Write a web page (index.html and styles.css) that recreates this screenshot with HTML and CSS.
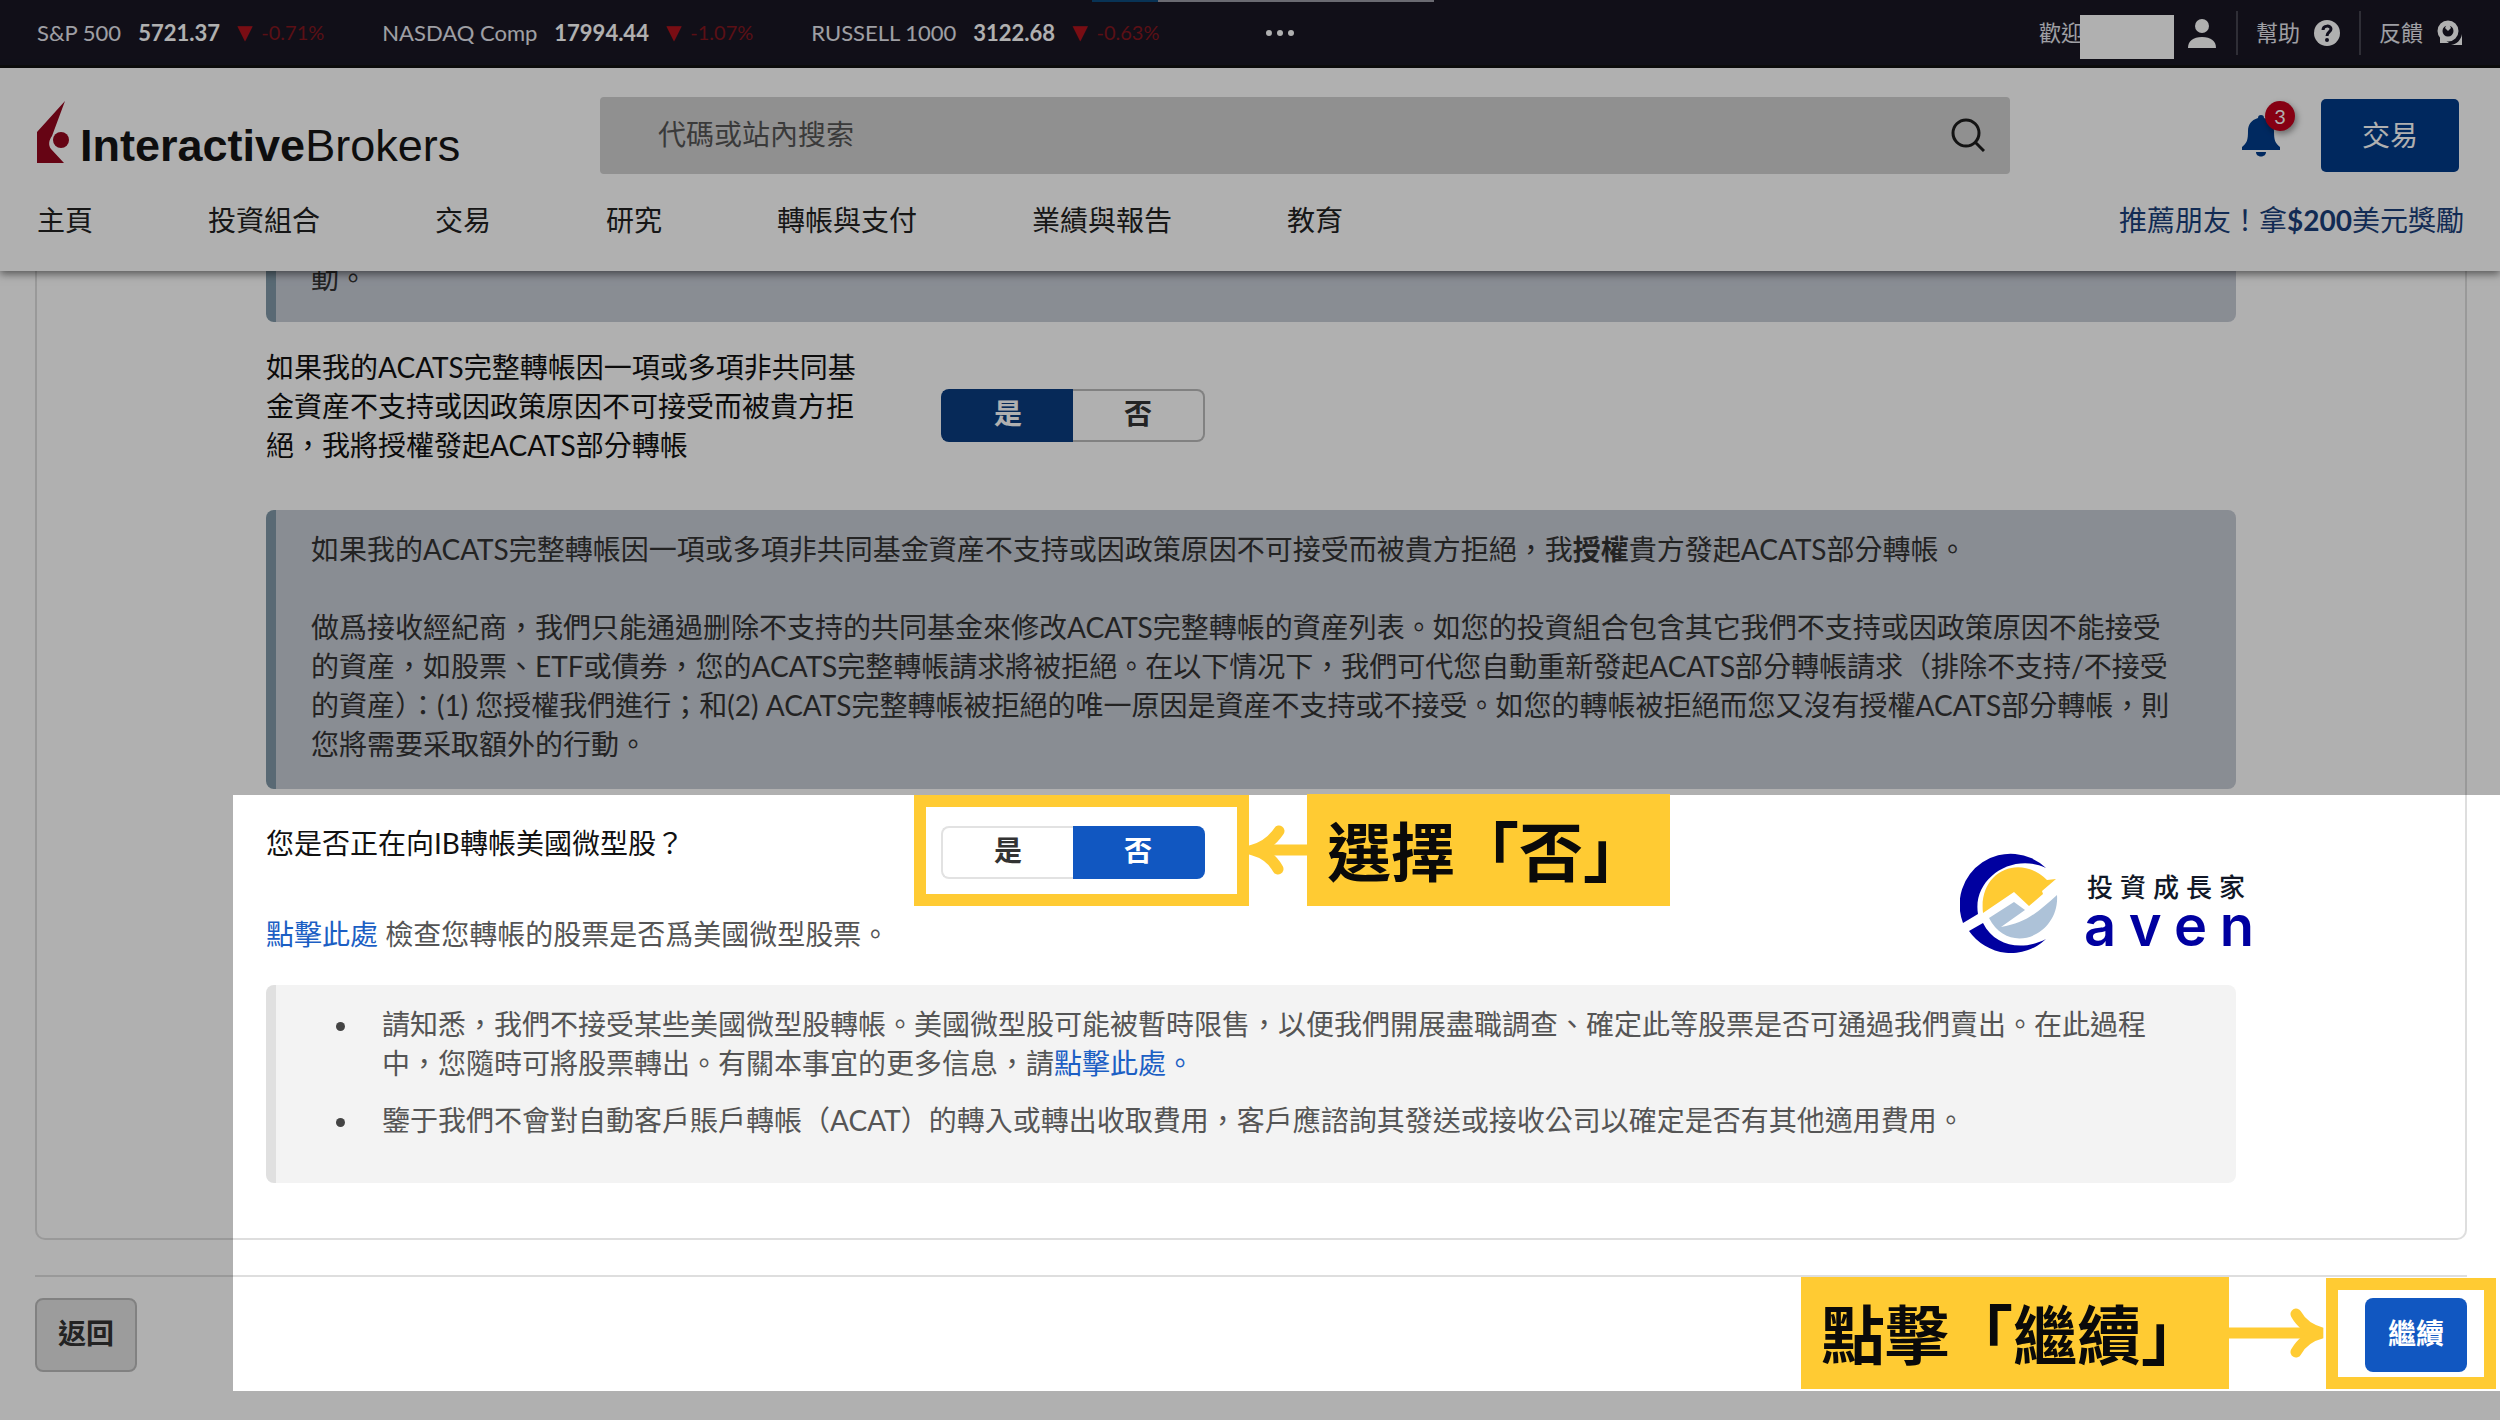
FILE: index.html
```html
<!DOCTYPE html>
<html lang="zh-Hant">
<head>
<meta charset="utf-8">
<title>InteractiveBrokers</title>
<link rel="stylesheet" href="styles.css">
</head>
<body>
<div class="page">
  <div class="topbar">
    <div class="progress"><i></i></div>
    <div class="tickers">
      <span class="ticker">S&amp;P 500 <b>5721.37</b> <span class="down">▼</span><em>-0.71%</em></span>
      <span class="ticker">NASDAQ Comp <b>17994.44</b> <span class="down">▼</span><em>-1.07%</em></span>
      <span class="ticker">RUSSELL 1000 <b>3122.68</b> <span class="down">▼</span><em>-0.63%</em></span>
      <button class="more" aria-label="更多"><i></i><i></i><i></i></button>
    </div>
    <div class="account">
      <span class="welcome">歡迎<i class="mask"></i>
        <svg width="28" height="32" viewBox="0 0 28 32"><circle cx="14" cy="9" r="7" fill="#fff"/><path d="M0 31c0-7 5-11 14-11s14 4 14 11z" fill="#fff"/></svg>
      </span>
      <a href="#" class="tool">幫助
        <svg width="28" height="28" viewBox="0 0 28 28"><circle cx="14" cy="14" r="13" fill="#fff"/><path d="M10 11c0-5 8-5 8-1 0 3-4 3-4 7" fill="none" stroke="#19172a" stroke-width="3"/><circle cx="14" cy="21" r="2" fill="#19172a"/></svg>
      </a>
      <a href="#" class="tool">反饋
        <svg width="28" height="28" viewBox="0 0 28 28"><path d="M26 15v11H15c6-1 10-5 11-11z" fill="#fff"/><circle cx="12" cy="12" r="8" fill="none" stroke="#fff" stroke-width="5"/><path d="M4 17v7h9z" fill="#fff"/><path d="M12 3l3 6-3 3-3-3z" fill="#fff"/></svg>
      </a>
    </div>
  </div>

  <header class="header">
    <div class="brand-row">
      <a href="#" class="logo">
        <svg width="34" height="64" viewBox="0 0 34 64"><path d="M28 0L0 31v31h27L14 48c-3-4-2-9 1-13z" fill="#94061e"/><circle cx="24" cy="39" r="8" fill="#94061e"/></svg>
        <span><b>Interactive</b>Brokers</span>
      </a>
      <form class="search">
        <input type="text" placeholder="代碼或站內搜索" aria-label="代碼或站內搜索">
        <button type="button" aria-label="搜索">
          <svg width="34" height="34" viewBox="0 0 34 34" fill="none" stroke="#1c1c1c" stroke-width="3"><circle cx="15" cy="15" r="13"/><path d="M24 24l9 9"/></svg>
        </button>
      </form>
      <div class="actions">
        <button class="bell" aria-label="通知">
          <svg width="38" height="42" viewBox="0 0 38 42" fill="#003c8c"><path d="M19 0c2 0 3 1 3 3 7 2 10 7 10 13 0 9 1 12 6 16v3H0v-3c5-4 6-7 6-16C6 10 9 5 16 3c0-2 1-3 3-3zM14 37h10c0 6-10 6-10 0z"/></svg>
          <span class="badge">3</span>
        </button>
        <button class="trade">交易</button>
      </div>
    </div>
    <nav class="nav">
      <a href="#">主頁</a><a href="#">投資組合</a><a href="#">交易</a><a href="#">研究</a><a href="#">轉帳與支付</a><a href="#">業績與報告</a><a href="#">教育</a>
      <a href="#" class="refer">推薦朋友！拿<b>$200</b>美元獎勵</a>
    </nav>
  </header>

  <main class="main">
    <section class="card">
      <div class="note note-blue note-cut"><p>動。</p></div>

      <div class="question">
        <p class="label" id="q1">如果我的ACATS完整轉帳因一項或多項非共同基金資産不支持或因政策原因不可接受而被貴方拒絕，我將授權發起ACATS部分轉帳</p>
        <div class="toggle toggle-mid" role="group" aria-labelledby="q1">
          <button class="on">是</button><button>否</button>
        </div>
      </div>

      <div class="note note-blue note-acats">
        <p>如果我的ACATS完整轉帳因一項或多項非共同基金資産不支持或因政策原因不可接受而被貴方拒絕，我<b>授權</b>貴方發起ACATS部分轉帳。</p>
        <p>做爲接收經紀商，我們只能通過删除不支持的共同基金來修改ACATS完整轉帳的資産列表。如您的投資組合包含其它我們不支持或因政策原因不能接受<br>的資産，如股票、ETF或債券，您的ACATS完整轉帳請求將被拒絕。在以下情况下，我們可代您自動重新發起ACATS部分轉帳請求（排除不支持/不接受<br>的資産）：(1) 您授權我們進行；和(2) ACATS完整轉帳被拒絕的唯一原因是資産不支持或不接受。如您的轉帳被拒絕而您又沒有授權ACATS部分轉帳，則<br>您將需要采取額外的行動。</p>
      </div>

      <div class="question question-micro">
        <p class="label" id="q2">您是否正在向IB轉帳美國微型股？</p>
        <div class="toggle" role="group" aria-labelledby="q2">
          <button>是</button><button class="on">否</button>
        </div>
      </div>
      <p class="check"><a href="#">點擊此處</a> 檢查您轉帳的股票是否爲美國微型股票。</p>

      <div class="note note-grey">
        <ul>
          <li>請知悉，我們不接受某些美國微型股轉帳。美國微型股可能被暫時限售，以便我們開展盡職調查、確定此等股票是否可通過我們賣出。在此過程<br>中，您隨時可將股票轉出。有關本事宜的更多信息，請<a href="#">點擊此處。</a></li>
          <li>鑒于我們不會對自動客戶賬戶轉帳（ACAT）的轉入或轉出收取費用，客戶應諮詢其發送或接收公司以確定是否有其他適用費用。</li>
        </ul>
      </div>
    </section>

    <footer class="footer">
      <button class="back">返回</button>
      <button class="next">繼續</button>
    </footer>
  </main>

  <div class="spotlight"></div>

  <div class="callout callout-choose">
    <div class="frame frame-toggle"></div>
    <svg width="58" height="50" viewBox="0 0 58 50" fill="none" stroke="#ffcb33" stroke-width="11" stroke-linecap="round"><path d="M58 25H6" stroke-linecap="butt"/><path d="M30 6C24 15 15 22 4 25c11 3 20 10 25 19"/></svg>
    <div class="tag">選擇「否」</div>
  </div>

  <div class="aven">
    <svg width="98" height="102" viewBox="0 0 98 102">
      <path d="M3 70A51 51 0 0 1 86 15C52-1 12 26 18 61z" fill="#0000a0"/>
      <path d="M9 78l14-8c12 24 40 28 63 16A51 51 0 0 1 9 78z" fill="#0000a0"/>
      <path d="M23 60C18 18 60 0 87 27l9-1-14 12 1 3-14 12-15-14z" fill="#ffcb33"/>
      <path d="M29 65l25-16 11 8-24 17C66 70 78 59 97 42c3 40-48 62-68 23z" fill="#adc2d8"/>
    </svg>
    <div class="aven-words">
      <div class="aven-zh"><span>投</span><span>資</span><span>成</span><span>長</span><span>家</span></div>
      <div class="aven-en"><span>a</span><span>v</span><span>e</span><span>n</span></div>
    </div>
  </div>

  <div class="callout callout-next">
    <div class="tag tag-wide">點擊「繼續」</div>
    <svg width="97" height="50" viewBox="0 0 97 50" fill="none" stroke="#ffcb33" stroke-width="11" stroke-linecap="round"><path d="M0 25h90" stroke-linecap="butt"/><path d="M67 6c5 9 14 16 26 19-12 3-21 10-26 19"/></svg>
    <div class="frame frame-next"></div>
  </div>
</div>
</body>
</html>
```
FILE: styles.css
```css
* { box-sizing: border-box; }

body {
  margin: 0;
  background: #fff;
  color: #333;
  font-family: Lato, "Noto Sans CJK TC", sans-serif;
  font-size: 28px;
  line-height: 39px;
}

p, ul { margin: 0; padding: 0; }
a { color: #1c5fc4; text-decoration: none; }
button { margin: 0; padding: 0; border: 0; background: none; font: inherit; color: inherit; }
svg { display: block; flex: none; }

.page { position: relative; min-height: 100vh; overflow: hidden; }

/* Market bar */
.topbar {
  position: relative;
  display: flex;
  justify-content: space-between;
  height: 68px;
  padding: 0 36px 0 37px;
  background: #191724;
  border-bottom: 3px solid #131313;
  color: #e6e6ee;
  font-size: 22px;
}
.progress { position: absolute; left: 1092px; top: 0; width: 342px; height: 2px; background: #9a9aa4; }
.progress i { display: block; width: 66px; height: 2px; background: #0d4a7c; }
.tickers { display: flex; align-items: center; gap: 58px; }
.ticker { display: flex; align-items: center; gap: 17px; white-space: nowrap; }
.ticker b { color: #fff; }
.ticker .down { color: #b0141c; font-family: "DejaVu Sans", sans-serif; font-size: 20px; }
.ticker em { margin-left: -8px; color: #84161f; font-size: 20px; font-style: normal; }
.more { display: flex; gap: 5px; margin-left: 48px; }
.more i { width: 6px; height: 6px; border-radius: 50%; background: #fff; }
.account { display: flex; align-items: center; }
.welcome { display: flex; align-items: center; height: 44px; padding-right: 20px; }
.mask { width: 94px; height: 44px; margin: 8px 14px 0 -3px; background: #fff; }
.tool { display: flex; align-items: center; gap: 13px; height: 44px; padding: 0 18px; border-left: 2px solid #45434f; color: #e6e6ee; }
.tool:last-child { padding-right: 0; }

/* Site header */
.header {
  position: relative;
  z-index: 1;
  height: 203px;
  padding: 29px 36px 0 37px;
  background: #fff;
  box-shadow: 0 3px 8px rgba(0, 0, 0, .5);
}
.brand-row { display: flex; height: 77px; }
.logo { display: flex; gap: 9px; width: 563px; flex: none; padding-top: 4px; color: #151515; font-family: "Liberation Sans", Arial, sans-serif; font-size: 45px; line-height: 50px; }
.logo span { padding-top: 20px; }
.search { display: flex; align-items: center; flex: 1; padding: 0 25px 2px 58px; border-radius: 4px; background: #d1d1d1; }
.search input { flex: 1; padding: 0; border: 0; background: none; font: inherit; outline: 0; }
.search input::placeholder { color: #555; opacity: 1; }
.actions { display: flex; align-items: center; justify-content: space-between; width: 217px; margin: 0 5px 0 232px; }
.bell { position: relative; }
.badge { position: absolute; left: 23px; top: -14px; width: 30px; height: 30px; border-radius: 50%; background: #c2001c; box-shadow: 2px 3px 6px rgba(0, 0, 0, .4); color: #fff; font-size: 20px; line-height: 30px; }
.trade { width: 138px; height: 73px; border-radius: 5px; background: #003a88; color: #fff; }
.nav { display: flex; gap: 115px; padding-top: 27px; }
.nav a { color: #222; white-space: nowrap; }
.nav .refer { margin-left: auto; color: #1b3f7a; }

/* Transfer form */
.main { padding: 0 33px 0 35px; }
.card { padding: 0 229px 55px; border: 2px solid #dedede; border-top: 0; border-radius: 0 0 10px 10px; }
.note { padding: 20px 20px 25px 35px; border-left: 10px solid #e0e0e0; border-radius: 8px; white-space: nowrap; }
.note p + p { margin-top: 39px; }
.note-blue { background: #c7ccd6; border-color: #8199a8; }
.note-cut { height: 51px; padding: 0 35px; border-radius: 0 0 8px 8px; overflow: hidden; }
.note-cut p { margin-top: -12px; }
.question { display: flex; align-items: flex-start; gap: 75px; margin-top: 26px; color: #111; }
.label { width: 600px; flex: none; }
.toggle { display: flex; width: 264px; height: 53px; margin-top: 2px; color: #333; font-weight: 700; }
.toggle-mid { margin-top: 41px; }
.toggle button { flex: 1; padding-bottom: 4px; border: 2px solid #e2e2e2; }
.toggle button:first-child { border-right: 0; border-radius: 8px 0 0 8px; }
.toggle button:last-child { border-left: 0; border-radius: 0 8px 8px 0; }
.toggle-mid button { border-color: #bbb; }
.toggle .on { border-color: #1157c1; background: #1157c1; color: #fff; }
.toggle-mid .on { border-color: #093c80; background: #093c80; }
.note-acats { margin-top: 45px; }
.question-micro { margin-top: 35px; }
.check { margin-top: 36px; color: #555; }
.note-grey { margin-top: 31px; padding: 20px 20px 43px 106px; background: #f3f3f3; color: #555; }
.note-grey ul { list-style: none; }
.note-grey li { position: relative; }
.note-grey li::before { content: ""; position: absolute; left: -46px; top: 17px; width: 9px; height: 9px; border-radius: 50%; background: #444; }
.note-grey li + li { margin-top: 18px; }
.footer { display: flex; justify-content: space-between; margin-top: 35px; padding-top: 21px; border-top: 2px solid #dedede; }
.footer button { width: 102px; height: 74px; padding-bottom: 3px; border-radius: 8px; font-weight: 700; }
.back { border: 2px solid #bcbcbc; background: #e2e2e2; color: #333; }
.next { background: #1157c1; color: #fff; }

/* Guide layer drawn over the form */
.spotlight {
  position: absolute;
  z-index: 2;
  left: 233px;
  right: 0;
  top: 795px;
  height: 596px;
  box-shadow: 0 0 0 9999px rgba(0, 0, 0, .31);
  pointer-events: none;
}
.callout { position: absolute; z-index: 3; display: flex; align-items: center; pointer-events: none; }
.callout-choose { left: 914px; top: 794px; }
.callout-next { right: 4px; top: 1277px; }
.frame { height: 111px; border: 12px solid #ffcb33; }
.frame-toggle { width: 335px; }
.frame-next { width: 170px; }
.tag { width: 363px; height: 112px; padding-left: 20px; background: #ffcb33; color: #0a0a0a; font-family: "Noto Sans CJK TC", sans-serif; font-size: 64px; font-weight: 700; line-height: 108px; white-space: nowrap; }
.tag-wide { width: 428px; }
.aven { position: absolute; z-index: 3; right: 246px; top: 853px; display: flex; gap: 26px; }
.aven-words { width: 170px; padding-top: 19px; }
.aven-zh { display: flex; gap: 7px; padding-left: 3px; color: #111827; font-size: 26px; font-weight: 500; line-height: 30px; }
.aven-en { display: flex; justify-content: space-between; color: #0000a0; font-family: Inter, sans-serif; font-size: 56px; font-weight: 600; line-height: 48px; }
```
